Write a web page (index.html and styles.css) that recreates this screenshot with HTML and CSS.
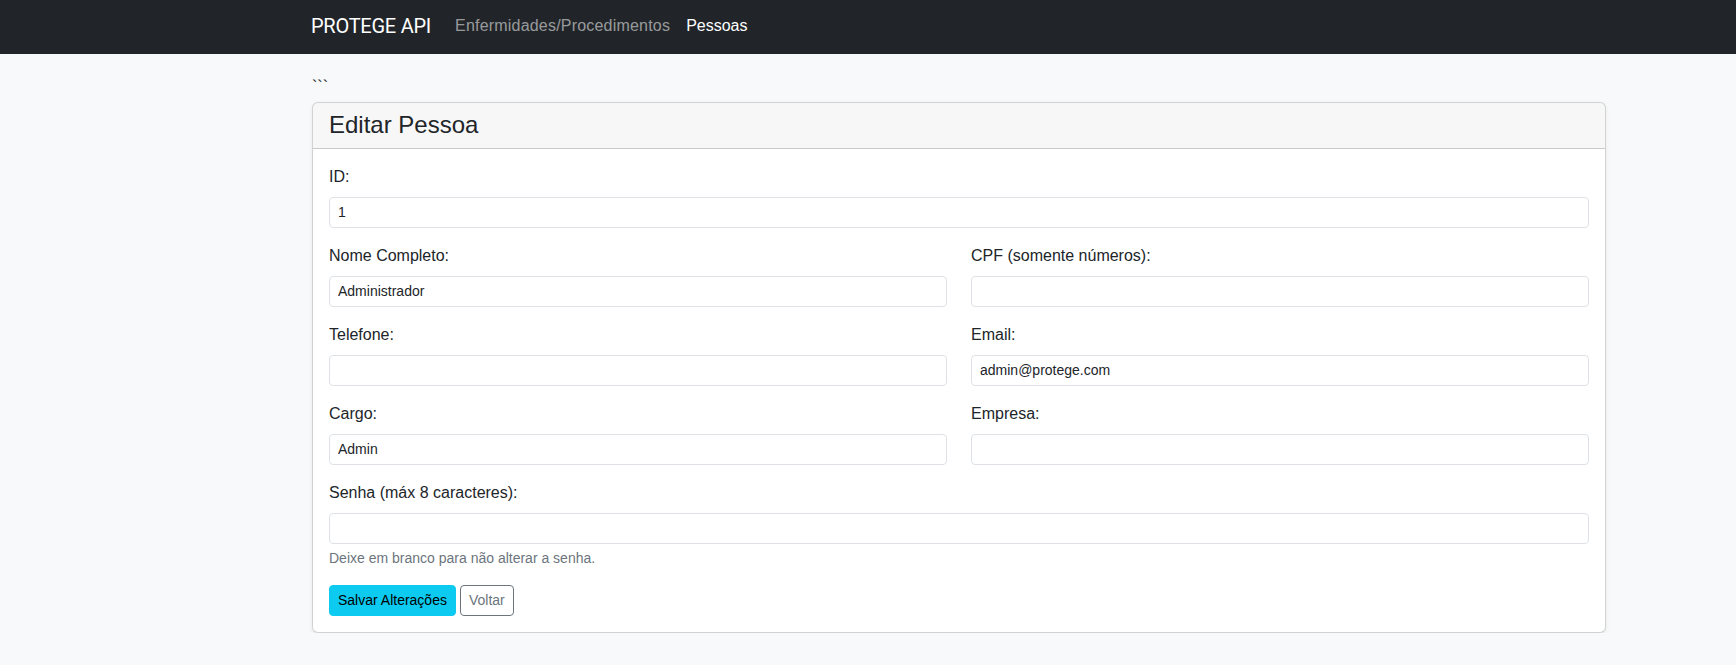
FILE: index.html
```html
<!DOCTYPE html>
<html lang="pt-BR">
<head>
<meta charset="utf-8">
<title>Editar Pessoa - PROTEGE API</title>
<link rel="stylesheet" href="styles.css">
</head>
<body>
<nav class="navbar">
  <a class="brand" href="#">PROTEGE API</a>
  <a class="nav-link" href="#">Enfermidades/Procedimentos</a>
  <a class="nav-link active" href="#">Pessoas</a>
</nav>
<main class="container">
  <div class="stray">```</div>
  <div class="card">
    <div class="card-header"><h4 class="card-title">Editar Pessoa</h4></div>
    <form class="card-body">
      <div class="field">
        <label class="form-label">ID:</label>
        <input class="form-control" type="text" value="1">
      </div>
      <div class="row">
        <div class="field">
          <label class="form-label">Nome Completo:</label>
          <input class="form-control" type="text" value="Administrador">
        </div>
        <div class="field">
          <label class="form-label">CPF (somente números):</label>
          <input class="form-control" type="text" value="">
        </div>
      </div>
      <div class="row">
        <div class="field">
          <label class="form-label">Telefone:</label>
          <input class="form-control" type="text" value="">
        </div>
        <div class="field">
          <label class="form-label">Email:</label>
          <input class="form-control" type="text" value="admin@protege.com">
        </div>
      </div>
      <div class="row">
        <div class="field">
          <label class="form-label">Cargo:</label>
          <input class="form-control" type="text" value="Admin">
        </div>
        <div class="field">
          <label class="form-label">Empresa:</label>
          <input class="form-control" type="text" value="">
        </div>
      </div>
      <div class="field">
        <label class="form-label">Senha (máx 8 caracteres):</label>
        <input class="form-control" type="password" value="">
        <div class="form-text">Deixe em branco para não alterar a senha.</div>
      </div>
      <div class="actions">
        <button type="button" class="btn btn-info">Salvar Alterações</button>
        <button type="button" class="btn btn-outline">Voltar</button>
      </div>
    </form>
  </div>
</main>
</body>
</html>
```
FILE: styles.css
```css
* { box-sizing: border-box; }

body {
  margin: 0;
  background: #f8f9fa;
  color: #212529;
  font-family: "Liberation Sans", Arial, sans-serif;
  font-size: 16px;
  line-height: 24px;
}

.navbar {
  height: 54px;
  background: #212529;
  display: flex;
  align-items: center;
  padding-left: 311px;
  padding-bottom: 2px;
}

.brand {
  font-family: Roboto, "Liberation Sans", sans-serif;
  font-size: 20px;
  letter-spacing: -0.25px;
  color: #fff;
  text-decoration: none;
  margin-right: 16px;
}

.nav-link {
  padding: 0 8px;
  letter-spacing: 0.2px;
  color: rgba(255, 255, 255, 0.55);
  text-decoration: none;
}

.nav-link.active {
  color: #fff;
  letter-spacing: 0;
}

.container {
  margin-left: 312px;
  width: 1294px;
  padding-top: 21px;
}

.stray {
  font-size: 16px;
  line-height: 24px;
  color: #212529;
}

.card {
  margin-top: 3px;
  background: #fff;
  border: 1px solid rgba(0, 0, 0, 0.175);
  border-radius: 6px;
  box-shadow: 0 2px 4px rgba(0, 0, 0, 0.075);
  overflow: hidden;
}

.card-header {
  padding: 8px 16px;
  background: rgba(0, 0, 0, 0.03);
  border-bottom: 1px solid rgba(0, 0, 0, 0.175);
}

.card-title {
  margin: 0;
  font-size: 24px;
  line-height: 1.2;
  font-weight: 400;
}

.card-body {
  display: block;
  padding: 16px;
  margin: 0;
}

.row {
  display: grid;
  grid-template-columns: 1fr 1fr;
  column-gap: 24px;
}

.field { margin-bottom: 16px; }

.form-label {
  display: block;
  margin-bottom: 8px;
}

.form-control {
  display: block;
  width: 100%;
  height: 31px;
  padding: 4px 8px;
  font-family: inherit;
  font-size: 14px;
  line-height: 21px;
  color: #212529;
  background: #fff;
  border: 1px solid #dee2e6;
  border-radius: 4px;
  outline: none;
}

.form-text {
  margin-top: 4px;
  font-size: 14px;
  line-height: 21px;
  color: #6c757d;
}

.actions {
  display: flex;
  gap: 4px;
}

.btn {
  height: 31px;
  padding: 4px 8px;
  font-family: inherit;
  font-size: 14px;
  line-height: 21px;
  border-radius: 4px;
  cursor: pointer;
}

.btn-info {
  background: #0dcaf0;
  border: 1px solid #0dcaf0;
  color: #000;
}

.btn-outline {
  background: transparent;
  border: 1px solid #6c757d;
  color: #6c757d;
}
```
